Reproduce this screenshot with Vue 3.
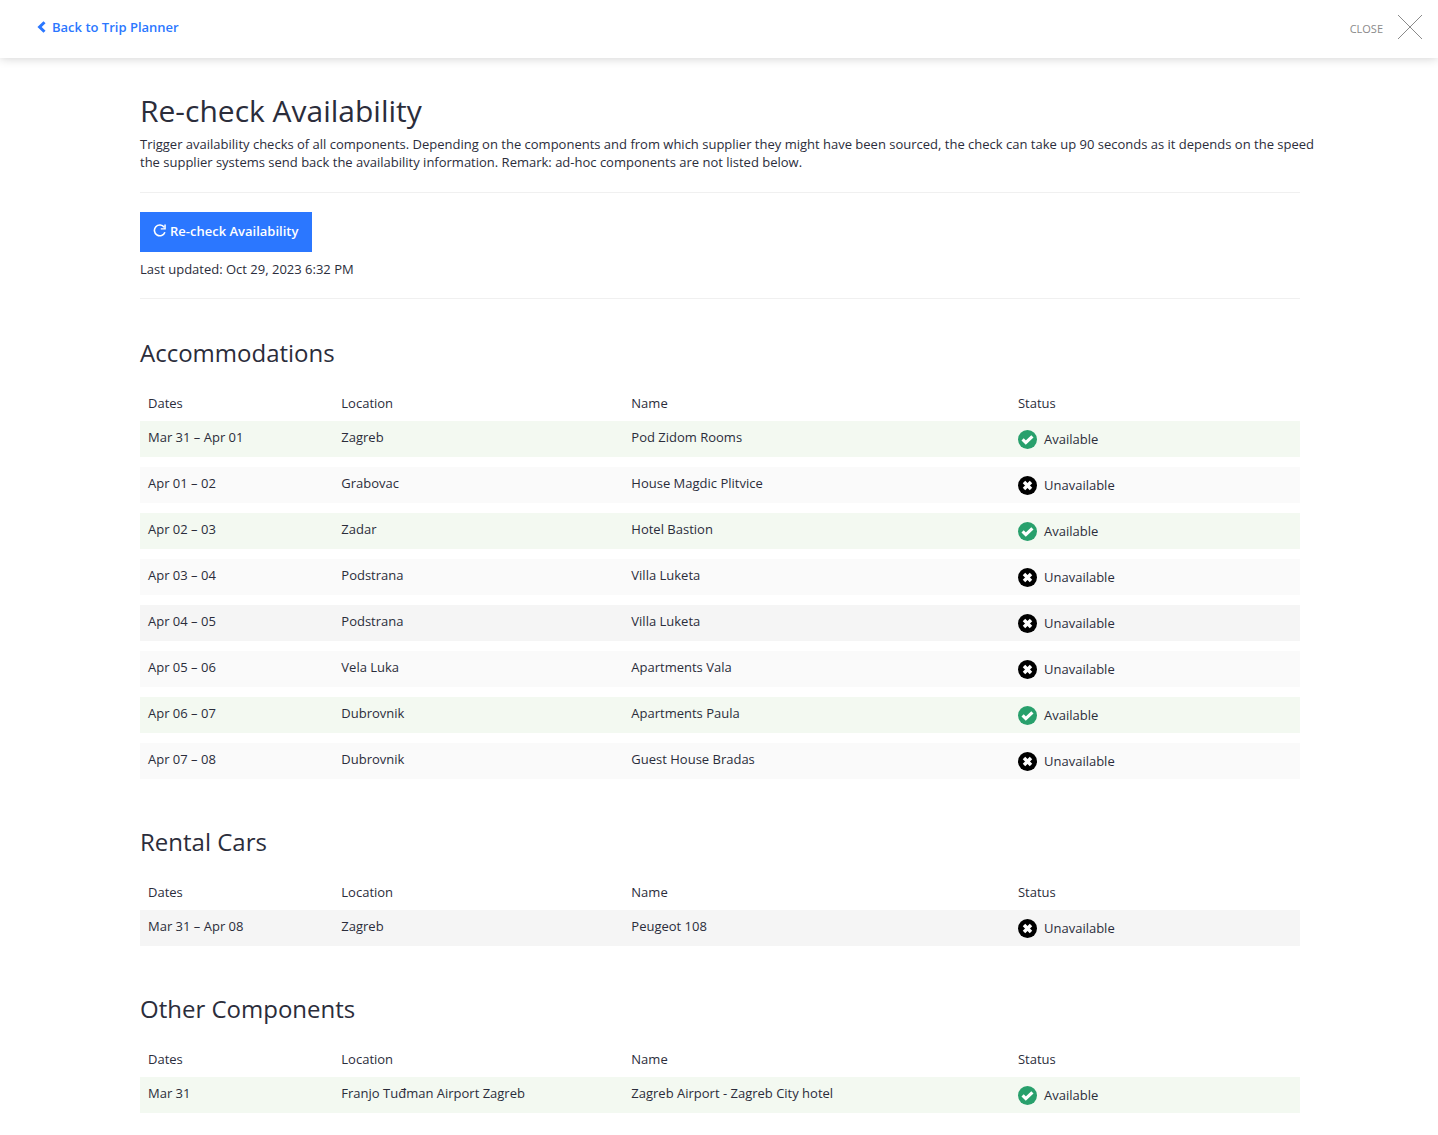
<script setup>
const sections = [
  {
    title: 'Accommodations',
    rows: [
      { dates: 'Mar 31 – Apr 01', location: 'Zagreb', name: 'Pod Zidom Rooms', available: true },
      { dates: 'Apr 01 – 02', location: 'Grabovac', name: 'House Magdic Plitvice', available: false },
      { dates: 'Apr 02 – 03', location: 'Zadar', name: 'Hotel Bastion', available: true },
      { dates: 'Apr 03 – 04', location: 'Podstrana', name: 'Villa Luketa', available: false },
      { dates: 'Apr 04 – 05', location: 'Podstrana', name: 'Villa Luketa', available: false },
      { dates: 'Apr 05 – 06', location: 'Vela Luka', name: 'Apartments Vala', available: false },
      { dates: 'Apr 06 – 07', location: 'Dubrovnik', name: 'Apartments Paula', available: true },
      { dates: 'Apr 07 – 08', location: 'Dubrovnik', name: 'Guest House Bradas', available: false },
    ],
  },
  {
    title: 'Rental Cars',
    rows: [{ dates: 'Mar 31 – Apr 08', location: 'Zagreb', name: 'Peugeot 108', available: false }],
  },
  {
    title: 'Other Components',
    rows: [
      {
        dates: 'Mar 31',
        location: 'Franjo Tuđman Airport Zagreb',
        name: 'Zagreb Airport - Zagreb City hotel',
        available: true,
      },
    ],
  },
]
</script>

<template>
  <div class="page">
    <header class="topbar">
      <a class="back" href="#">
        <svg width="9" height="12" viewBox="0 0 9 12" aria-hidden="true">
          <path d="M7.5 1.2 2.6 6l4.9 4.8" fill="none" stroke="currentColor" stroke-width="3" />
        </svg>
        Back to Trip Planner
      </a>
      <button class="close" type="button">
        <span>CLOSE</span>
        <svg width="26" height="26" viewBox="0 0 26 26" aria-hidden="true">
          <path d="M1 1l24 24M25 1 1 25" fill="none" stroke="#8a8a8a" stroke-width="1" />
        </svg>
      </button>
    </header>

    <main class="content">
      <h1>Re-check Availability</h1>
      <p class="intro">
        Trigger availability checks of all components. Depending on the components and from which
        supplier they might have been sourced, the check can take up 90 seconds as it depends on the
        speed the supplier systems send back the availability information. Remark: ad-hoc components
        are not listed below.
      </p>

      <div class="actions">
        <button class="recheck" type="button">
          <svg width="14" height="14" viewBox="0 0 14 14" aria-hidden="true">
            <path d="M11.2 3.2A5.4 5.4 0 1 0 11.9 8.2" fill="none" stroke="currentColor" stroke-width="1.6" />
            <path d="M12.8 0.6v5H7.8V4.2h3.5V0.6z" fill="currentColor" />
          </svg>
          <span>Re-check Availability</span>
        </button>
        <p class="updated">Last updated: Oct 29, 2023 6:32 PM</p>
      </div>

      <section v-for="section in sections" :key="section.title">
        <h2>{{ section.title }}</h2>
        <table>
          <thead>
            <tr>
              <th class="dates" scope="col">Dates</th>
              <th class="location" scope="col">Location</th>
              <th class="name" scope="col">Name</th>
              <th class="state" scope="col">Status</th>
            </tr>
          </thead>
          <tbody>
            <tr v-for="row in section.rows" :key="row.dates" :class="{ available: row.available }">
              <td>{{ row.dates }}</td>
              <td>{{ row.location }}</td>
              <td>{{ row.name }}</td>
              <td>
                <span class="status">
                  <svg v-if="row.available" width="19" height="19" viewBox="0 0 19 19" aria-hidden="true">
                    <circle cx="9.5" cy="9.5" r="9.5" fill="#28a06c" />
                    <path d="M4.6 9.4l3.2 3.2 6.6-6.3" fill="none" stroke="#fff" stroke-width="3.2" />
                  </svg>
                  <svg v-else width="19" height="19" viewBox="0 0 19 19" aria-hidden="true">
                    <circle cx="9.5" cy="9.5" r="9.5" fill="#000" />
                    <path d="M6 6l7 7M13 6l-7 7" fill="none" stroke="#fff" stroke-width="3.5" />
                  </svg>
                  {{ row.available ? 'Available' : 'Unavailable' }}
                </span>
              </td>
            </tr>
          </tbody>
        </table>
      </section>
    </main>
  </div>
</template>

<style>
body {
  margin: 0;
  background: #fff;
}
</style>

<style scoped>
.page {
  color: #2b2d3b;
  font-family: 'Open Sans', 'Noto Sans', sans-serif;
  font-size: 13px;
  line-height: 18px;
}

.topbar {
  display: flex;
  align-items: center;
  justify-content: space-between;
  height: 58px;
  padding: 0 15px 4px 37px;
  box-sizing: border-box;
  box-shadow: 0 0 10px rgba(0, 0, 0, 0.2);
}

.back {
  display: flex;
  align-items: center;
  gap: 6px;
  color: #2b77ff;
  font-weight: 600;
  text-decoration: none;
}

.close {
  display: flex;
  align-items: center;
  gap: 14px;
  padding: 0;
  border: 0;
  background: none;
  color: #8a8a8a;
  font-family: inherit;
  font-size: 11px;
  cursor: pointer;
}

.close span {
  padding-top: 2px;
}

.content {
  max-width: 1160px;
  margin: 0 auto;
  padding: 34px 18px 12px 20px;
}

h1,
h2,
p {
  margin: 0;
}

h1 {
  font-size: 30px;
  font-weight: 400;
  line-height: 38px;
}

.intro {
  margin-right: -20px;
  padding: 5px 0 21px;
}

.actions {
  margin-bottom: 1px;
  padding: 19px 0 20px;
  border-top: 1px solid #f0f0f0;
  border-bottom: 1px solid #f0f0f0;
}

.recheck {
  display: flex;
  align-items: center;
  gap: 3px;
  height: 40px;
  padding: 0 14px 2px 13px;
  border: 0;
  background: #2b77ff;
  color: #fff;
  font-family: inherit;
  font-size: 13px;
  font-weight: 600;
  cursor: pointer;
}

.updated {
  padding-top: 8px;
}

section {
  padding-top: 37px;
}

h2 {
  font-size: 24px;
  font-weight: 400;
  line-height: 32px;
}

table {
  width: 100%;
  margin-top: 18px;
  border-spacing: 0;
  table-layout: fixed;
}

th,
td {
  box-sizing: border-box;
  text-align: left;
  vertical-align: top;
  font-weight: 400;
}

th {
  padding: 7px 8px 9px;
}

.dates {
  width: 16.6667%;
}

.location,
.state {
  width: 25%;
}

.name {
  width: 33.3333%;
}

td {
  height: 46px;
  padding: 7px 8px 0;
  border-bottom: 10px solid #fff;
  background: #fafafa;
  background-clip: padding-box;
}

tbody tr:nth-child(5) td,
tbody tr:only-child td {
  background-color: #f5f5f5;
}

tbody tr.available td {
  background-color: #f3f9f1;
}

.status {
  display: flex;
  align-items: flex-start;
  gap: 7px;
  padding-top: 2px;
}
</style>
